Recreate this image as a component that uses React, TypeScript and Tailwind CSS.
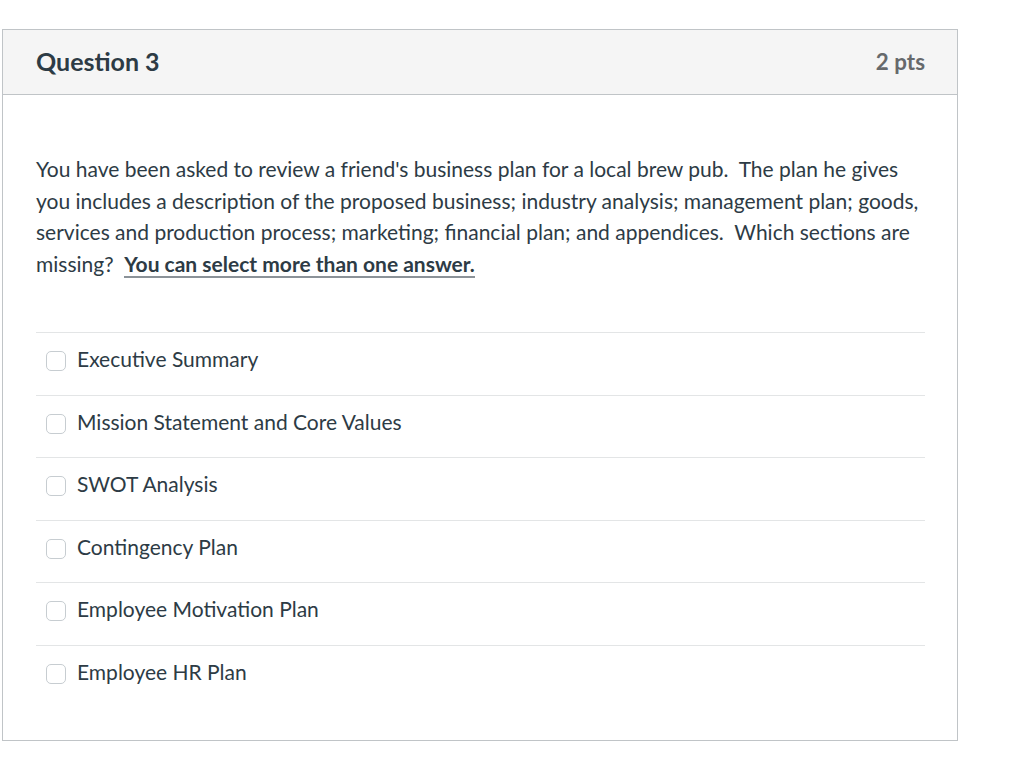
const answers = [
  "Executive Summary",
  "Mission Statement and Core Values",
  "SWOT Analysis",
  "Contingency Plan",
  "Employee Motivation Plan",
  "Employee HR Plan",
];

export default function App() {
  return (
    <div className="min-h-[778px] w-[1024px] bg-white pt-[29px] pl-[2px] font-['Lato','Open_Sans',sans-serif] text-[#2d3b45]">
      <div className="w-[956px] border border-[#c0c4c7] bg-white">
        <div className="flex h-[65px] items-center justify-between border-b border-[#c0c4c7] bg-[#f5f5f5] pl-[33px] pr-[32px]">
          <h2 className="text-[25px] font-bold text-[#2d3b45]">Question 3</h2>
          <span className="text-[22.4px] font-bold text-[#66696c]">2 pts</span>
        </div>
        <div className="px-[33px] pt-[58px] pb-[33px]">
          <p className="text-[21px] leading-[31.5px]">
            You have been asked to review a friend's business plan for a local brew pub.&nbsp; The plan he gives
            <br />
            you includes a description of the proposed business; industry analysis; management plan; goods,
            <br />
            services and production process; marketing; financial plan; and appendices.&nbsp; Which sections are
            <br />
            missing?&nbsp;{" "}
            <span className="border-b-2 border-[#8b9298] font-bold">You can select more than one answer.</span>
          </p>
          <ul className="mt-[53px] w-[889px]">
            {answers.map((a) => (
              <li key={a} className="flex h-[62.5px] items-center gap-[11px] border-t border-[#e3e5e6] pb-[5px] pl-[10px]">
                <span className="h-[20px] w-[20px] shrink-0 rounded-[5px] border border-[#c7cdd1] bg-white" />
                <span className="mb-[5px] text-[21px]">{a}</span>
              </li>
            ))}
          </ul>
        </div>
      </div>
    </div>
  );
}
